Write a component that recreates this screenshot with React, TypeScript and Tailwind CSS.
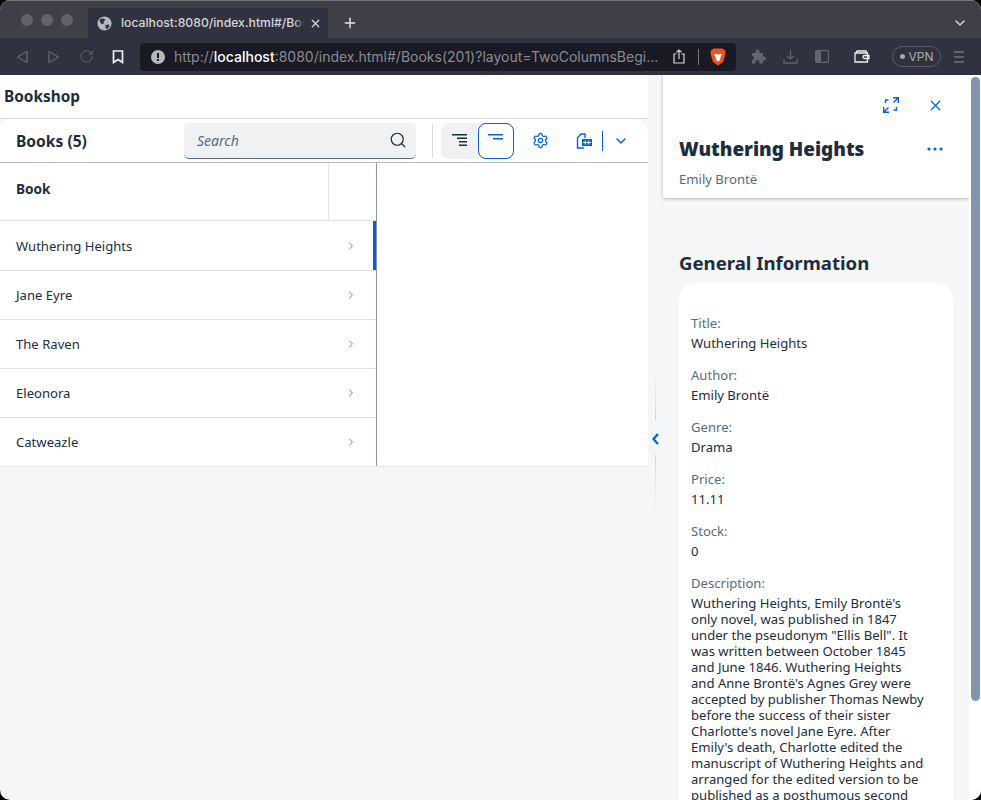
import React from 'react';
import { ChevronDown, ChevronRight, Plus, RotateCw, Search, Settings, X } from 'lucide-react';

const books = ['Wuthering Heights', 'Jane Eyre', 'The Raven', 'Eleonora', 'Catweazle'];

const details = [
  { label: 'Title:', value: 'Wuthering Heights' },
  { label: 'Author:', value: 'Emily Brontë' },
  { label: 'Genre:', value: 'Drama' },
  { label: 'Price:', value: '11.11' },
  { label: 'Stock:', value: '0' },
];

const description = [
  "Wuthering Heights, Emily Brontë's",
  'only novel, was published in 1847',
  'under the pseudonym "Ellis Bell". It',
  'was written between October 1845',
  'and June 1846. Wuthering Heights',
  "and Anne Brontë's Agnes Grey were",
  'accepted by publisher Thomas Newby',
  'before the success of their sister',
  "Charlotte's novel Jane Eyre. After",
  "Emily's death, Charlotte edited the",
  'manuscript of Wuthering Heights and',
  'arranged for the edited version to be',
  'published as a posthumous second',
];

function BrowserBar() {
  return (
    <div className="shrink-0 font-['Inter',sans-serif]">
      {/* tab strip */}
      <div className="h-[38px] bg-[#3e3f47] border-t border-[#77787d] flex items-end">
        <div className="flex gap-[8px] pl-[21px] pr-[15px] pb-[12px]">
          <div className="w-[12px] h-[12px] rounded-full bg-[#62636a]" />
          <div className="w-[12px] h-[12px] rounded-full bg-[#62636a]" />
          <div className="w-[12px] h-[12px] rounded-full bg-[#62636a]" />
        </div>
        <div className="w-[240px] h-[30px] bg-[#30323f] flex items-center pl-[9px] pr-[6px] rounded-t-[3px]">
          <svg width="15" height="15" viewBox="0 0 16 16" className="shrink-0">
            <circle cx="8" cy="8" r="7.5" fill="#b6b8bf" />
            <path d="M3 3.5 6.5 2.500 9 4 7 6 7.500 8 5 8.500 3 6.500ZM9 9.500l3.500-.5 1 2-3 3-1.500-1.500Z" fill="#30323f" />
          </svg>
          <div className="relative ml-[9px] w-[183px] overflow-hidden">
            <div className="text-[12.2px] font-medium leading-[16px] text-[#d5d6da] whitespace-nowrap">
              localhost:8080/index.html#/Boo
            </div>
            <div className="absolute right-0 top-0 h-full w-[10px] bg-gradient-to-r from-transparent to-[#30323f]" />
          </div>
          <X size={13} strokeWidth={2.4} className="text-[#d5d6da] ml-auto" />
        </div>
        <Plus size={16} strokeWidth={2.2} className="text-[#e5e6e9] ml-[14px] mb-[7px]" />
        <ChevronDown size={16} strokeWidth={2.2} className="text-[#d5d6da] ml-auto mr-[13px] mb-[7px]" />
      </div>
      {/* address row */}
      <div className="h-[37px] bg-[#30323f] flex items-center">
        <div className="flex items-center w-[140px] pl-[15px]">
          <svg width="14" height="16" viewBox="0 0 14 16" fill="none" stroke="#62646f" strokeWidth="1.4" strokeLinejoin="round">
            <path d="M12 2.500 2.500 8 12 13.500Z" />
          </svg>
          <svg width="14" height="16" viewBox="0 0 14 16" fill="none" stroke="#62646f" strokeWidth="1.4" strokeLinejoin="round" className="ml-[18px]">
            <path d="M2 2.500 11.500 8 2 13.500Z" />
          </svg>
          <RotateCw size={15} strokeWidth={1.6} className="text-[#62646f] ml-[18px]" />
          <svg width="12" height="14" viewBox="0 0 12 14" fill="none" stroke="#f0f0f2" strokeWidth="1.7" className="ml-[18px]">
            <path d="M1.500 1h9v11.500L6 9.500 1.500 12.500Z" />
          </svg>
        </div>
        <div className="w-[596px] h-[28px] bg-[#191a23] rounded-[4px] flex items-center pl-[11px] pr-[10px]">
          <svg width="14" height="14" viewBox="0 0 14 14" className="shrink-0">
            <circle cx="7" cy="7" r="7" fill="#b6b8bf" />
            <rect x="6" y="3" width="2" height="5" fill="#191a23" />
            <rect x="6" y="9" width="2" height="2" fill="#191a23" />
          </svg>
          <span className="ml-[9px] text-[14px] leading-none text-[#8a8b92] whitespace-nowrap">
            http://<span className="text-white font-medium">localhost</span>:8080/index.html#/Books(201)?layout=TwoColumnsBegi...
          </span>
          <svg width="12" height="15" viewBox="0 0 12 15" fill="none" stroke="#d5d6da" strokeWidth="1.2" className="ml-auto shrink-0">
            <path d="M3.500 5H1v9h10V5H8.500M6 10V1M3.500 3.300 6 1l2.500 2.300" />
          </svg>
          <div className="w-px h-[16px] bg-[#77787d] ml-[13px] mr-[11px]" />
          <svg width="16" height="18" viewBox="0 0 16 18" className="shrink-0">
            <path d="M3.500 0.500h9L15.500 3 15 7.500 13 14 8 17.500 3 14 1 7.500 .5 3Z" fill="#f1511b" />
            <path d="M4 6h3l1 1 1-1h3l-1.500 3L10 12l-2 1.500L6 12 5.500 9Z" fill="#fff" />
          </svg>
        </div>
        <div className="flex items-center flex-1 pl-[15px]">
          <svg width="15" height="15" viewBox="0 0 15 15" fill="#62646f">
            <path d="M1 4h3.500V2.500a2 2 0 0 1 4 0V4H12v3.500h1a2 2 0 0 1 0 4h-1V14.500H8.500V13a2 2 0 0 0-4 0v1.500H1V11a2 2 0 0 0 0-4Z" />
          </svg>
          <svg width="15" height="15" viewBox="0 0 15 15" fill="none" stroke="#62646f" strokeWidth="1.300" className="ml-[17px]">
            <path d="M7.500 1v9M4 7l3.500 3L11 7M1 10v4h13v-4" />
          </svg>
          <svg width="14" height="13" viewBox="0 0 14 13" className="ml-[17px]">
            <rect x=".6" y=".6" width="12.800" height="11.800" rx="1" fill="none" stroke="#62646f" strokeWidth="1.200" />
            <rect x="1" y="1" width="5" height="11" fill="#62646f" />
          </svg>
          <svg width="16" height="13" viewBox="0 0 16 13" fill="none" stroke="#f0f0f2" strokeWidth="1.300" className="ml-[25px]">
            <path d="M2 3 3 1h9l1 2M1 3h12.500v9H1ZM15 5.500h-4.500a1.500 1.500 0 0 0 0 3H15Z" />
          </svg>
          <div className="ml-[22px] w-[49px] h-[21px] rounded-full border border-[#5a5c68] flex items-center justify-center gap-[4px] text-[12px] text-[#a7a8ae]">
            <div className="w-[5px] h-[5px] rounded-full bg-[#a7a8ae]" />
            VPN
          </div>
          <div className="ml-[13px] w-[10px] flex flex-col gap-[3px]">
            <div className="h-[2px] bg-[#62646f]" />
            <div className="h-[2px] bg-[#62646f]" />
            <div className="h-[2px] bg-[#62646f]" />
          </div>
        </div>
      </div>
    </div>
  );
}

function Toolbar() {
  return (
    <div className="h-[44px] bg-white rounded-tr-[14px] rounded-tl-[10px] border-b border-[#b4bcc4] flex items-center shrink-0">
      <h2 className="ml-[16px] w-[168px] pt-[2px] text-[15.6px] font-bold text-[#1d2d3e]">Books (5)</h2>
      <div className="w-[232px] h-[36px] bg-[#eff1f2] rounded-t-[4px] rounded-b-[5px] border-b border-[#556b82] flex items-center pl-[13px] pr-[9px]">
        <span className="text-[14px] italic text-[#556b82]">Search</span>
        <Search size={18} strokeWidth={1.6} className="ml-auto text-[#1d2d3e]" />
      </div>
      <div className="ml-[16px] w-px h-[34px] bg-[#d9d9d9]" />
      <div className="ml-[8px] flex w-[73px] h-[36px] bg-[#eff1f2] rounded-[8px]">
        <div className="w-[37px] flex items-center justify-center">
          <svg width="16" height="13" viewBox="0 0 16 13" fill="#1d2d3e">
            <rect x="0" y="0" width="15" height="1.500" />
            <rect x="5" y="3.500" width="10" height="1.500" />
            <rect x="7" y="7" width="8" height="1.500" />
            <rect x="7" y="10.500" width="8" height="1.500" />
          </svg>
        </div>
        <div className="w-[36px] bg-white border border-[#0064d9] rounded-[8px] flex items-start justify-center pt-[10px]">
          <svg width="16" height="6" viewBox="0 0 16 6" fill="#0064d9">
            <rect x="0" y="0" width="15" height="1.500" />
            <rect x="5" y="4" width="10" height="1.500" />
          </svg>
        </div>
      </div>
      <Settings size={17} strokeWidth={1.8} className="ml-[18px] text-[#0064d9]" />
      <svg width="17" height="16" viewBox="0 0 17 16" fill="none" stroke="#0064d9" strokeWidth="1.400" className="ml-[27px]">
        <path d="M8 15H1.500V5L5 1h4v4" />
        <rect x="6" y="6" width="10" height="7" fill="#0064d9" stroke="none" />
        <path d="M9.300 7.500v4M12.700 7.500v4M7 9.500h8" stroke="#fff" strokeWidth="1" />
      </svg>
      <div className="ml-[9px] w-px h-[20px] bg-[#0064d9]" />
      <ChevronDown size={16} strokeWidth={2.2} className="ml-[10px] text-[#0064d9]" />
    </div>
  );
}

function BooksTable() {
  return (
    <div className="w-[377px] border-r border-[#8d97a1] bg-white">
      <div className="h-[58px] border-b border-[#e5e5e5] flex">
        <div className="w-[329px] border-r border-[#e5e5e5] pl-[16px] pt-[17px] text-[13.6px] leading-[18px] font-bold text-[#1d2d3e]">
          Book
        </div>
      </div>
      {books.map((book, i) => (
        <div
          key={book}
          className={`flex items-center pl-[16px] text-[13.1px] text-[#1d2d3e] ${
            i === 0 ? 'h-[50px] border-b border-[#e5e5e5]' : i === 4 ? 'h-[48px]' : 'h-[49px] border-b border-[#e5e5e5]'
          }`}
        >
          <span className="flex-1 pt-[2px]">{book}</span>
          <ChevronRight size={12} strokeWidth={2} className="text-[#6f8299] mr-[16px]" />
          {i === 0 ? <div className="w-[3px] h-[49px] bg-[#0064d9]" /> : <div className="w-[3px]" />}
        </div>
      ))}
    </div>
  );
}

function DetailPanel() {
  return (
    <div className="w-[306px] flex flex-col">
      <div className="h-[123px] bg-white shadow-[0_1px_3px_rgba(0,0,0,0.25)] shrink-0 pl-[16px] pr-[23px]">
        <div className="flex justify-end items-center h-[60px] gap-[28px] pr-[2px]">
          <svg width="16" height="16" viewBox="0 0 16 16" fill="none" stroke="#0064d9" strokeWidth="1.400">
            <path d="M10 .7h5.300V6M15.300 .7 10.500 5.500M.7 10v5.300H6M.7 15.300l4.800-4.800M2.500 6V3h3M13.500 10v3h-3" />
          </svg>
          <X size={17} strokeWidth={1.7} className="text-[#0064d9]" />
        </div>
        <div className="flex items-center justify-between h-[28px]">
          <h1 className="text-[18.9px] font-black text-[#1d2d3e]">Wuthering Heights</h1>
          <svg width="16" height="4" viewBox="0 0 16 4" fill="#0064d9" className="mr-[3px]">
            <circle cx="2" cy="2" r="1.600" />
            <circle cx="8" cy="2" r="1.600" />
            <circle cx="14" cy="2" r="1.600" />
          </svg>
        </div>
        <p className="mt-[7px] text-[13.1px] leading-[18px] text-[#556b82]">Emily Brontë</p>
      </div>
      <div className="px-[16px] pt-[51px]">
        <h2 className="text-[18.6px] leading-[28px] font-bold text-[#1d2d3e]">General Information</h2>
        <div className="mt-[6px] bg-white rounded-[16px] pt-[32px] px-[12px] pb-[16px] h-[600px]">
          {details.map((item) => (
            <div key={item.label} className="mb-[16px] text-[13.1px] leading-[16px]">
              <div className="text-[#556b82]">{item.label}</div>
              <div className="mt-[4px] text-[#1d2d3e]">{item.value}</div>
            </div>
          ))}
          <div className="text-[13.1px] leading-[16px]">
            <div className="text-[#556b82]">Description:</div>
            <div className="mt-[4px] text-[#1d2d3e] whitespace-nowrap">
              {description.map((line) => (
                <div key={line}>{line}</div>
              ))}
            </div>
          </div>
        </div>
      </div>
    </div>
  );
}

export default function App() {
  return (
    <div className="h-[800px] overflow-hidden bg-black">
      <div className="h-[800px] rounded-[10px] overflow-hidden flex flex-col bg-[#f5f6f7] font-['Noto_Sans',sans-serif]">
        <BrowserBar />
        <div className="flex-1 flex min-h-0">
          {/* list column */}
          <div className="w-[648px] flex flex-col">
            <div className="h-[44px] bg-white border-b border-[#d9d9d9] pl-[4px] flex items-center text-[15.4px] font-bold text-[#1d2d3e] shrink-0">
              Bookshop
            </div>
            <Toolbar />
            <div className="bg-white border-b border-[#e5e5e5]">
              <BooksTable />
            </div>
          </div>
          {/* resize handle */}
          <div className="w-[15px] flex flex-col items-center pt-[291px] pr-[1px]">
            <div className="w-px h-[55px] bg-gradient-to-b from-transparent to-[#d5d8da]" />
            <svg width="7" height="12" viewBox="0 0 7 12" fill="none" stroke="#0064d9" strokeWidth="2.200" className="mt-[12px] mb-[10px] ml-[1px]">
              <path d="M6 1 1.500 6 6 11" />
            </svg>
            <div className="w-px h-[58px] bg-gradient-to-b from-[#d5d8da] to-transparent" />
          </div>
          <DetailPanel />
          {/* scrollbar */}
          <div className="w-[12px] bg-white pl-[2px] pr-[1px] pt-[2px]">
            <div className="h-[624px] bg-[#7f96ad] rounded-[5px]" />
          </div>
        </div>
      </div>
    </div>
  );
}
